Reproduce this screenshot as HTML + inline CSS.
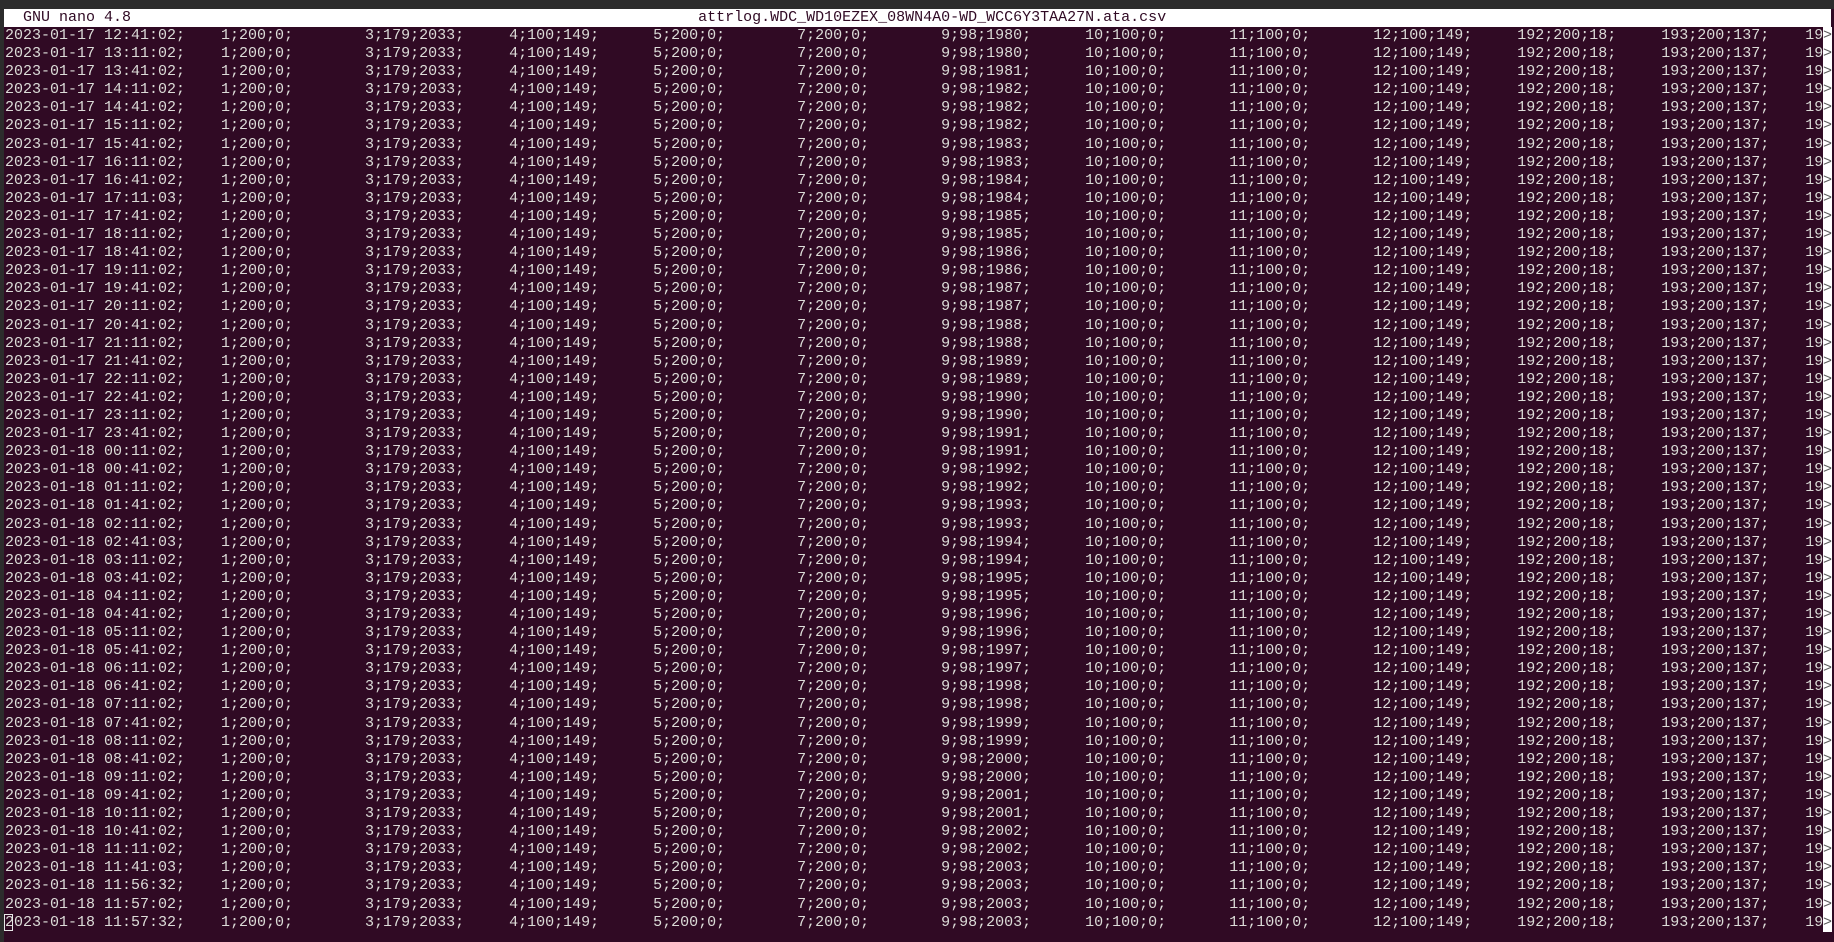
<!DOCTYPE html>
<html><head><meta charset="utf-8"><style>
html,body{margin:0;padding:0;width:1834px;height:942px;overflow:hidden;background:#2c2c2c;}
#term{position:absolute;left:4px;top:9px;width:1830px;height:933px;background:#300a24;}
#title{position:absolute;left:4px;top:9px;width:1827px;height:18px;background:#fff;}
pre{margin:0;font-family:"Liberation Mono",monospace;font-size:15px;line-height:18.1px;white-space:pre;}
#tt{position:absolute;left:5px;top:9px;color:#300a24;line-height:18px;}
#body{position:absolute;left:5px;top:27px;color:#dcdcd8;}
#strip{position:absolute;left:1823px;top:27px;width:9px;height:905px;background:#fff;}
#gt{position:absolute;left:1823px;top:27px;color:#5a5a5a;}
#cur{position:absolute;left:4px;top:914px;width:9px;height:17px;border:1px solid #e8e8e8;box-sizing:border-box;}
</style></head><body>
<div id="term"></div>
<div id="title"></div>
<pre id="tt">  GNU nano 4.8                                                               attrlog.WDC_WD10EZEX_08WN4A0-WD_WCC6Y3TAA27N.ata.csv</pre>
<pre id="body">2023-01-17 12:41:02;    1;200;0;        3;179;2033;     4;100;149;      5;200;0;        7;200;0;        9;98;1980;      10;100;0;       11;100;0;       12;100;149;     192;200;18;     193;200;137;    19
2023-01-17 13:11:02;    1;200;0;        3;179;2033;     4;100;149;      5;200;0;        7;200;0;        9;98;1980;      10;100;0;       11;100;0;       12;100;149;     192;200;18;     193;200;137;    19
2023-01-17 13:41:02;    1;200;0;        3;179;2033;     4;100;149;      5;200;0;        7;200;0;        9;98;1981;      10;100;0;       11;100;0;       12;100;149;     192;200;18;     193;200;137;    19
2023-01-17 14:11:02;    1;200;0;        3;179;2033;     4;100;149;      5;200;0;        7;200;0;        9;98;1982;      10;100;0;       11;100;0;       12;100;149;     192;200;18;     193;200;137;    19
2023-01-17 14:41:02;    1;200;0;        3;179;2033;     4;100;149;      5;200;0;        7;200;0;        9;98;1982;      10;100;0;       11;100;0;       12;100;149;     192;200;18;     193;200;137;    19
2023-01-17 15:11:02;    1;200;0;        3;179;2033;     4;100;149;      5;200;0;        7;200;0;        9;98;1982;      10;100;0;       11;100;0;       12;100;149;     192;200;18;     193;200;137;    19
2023-01-17 15:41:02;    1;200;0;        3;179;2033;     4;100;149;      5;200;0;        7;200;0;        9;98;1983;      10;100;0;       11;100;0;       12;100;149;     192;200;18;     193;200;137;    19
2023-01-17 16:11:02;    1;200;0;        3;179;2033;     4;100;149;      5;200;0;        7;200;0;        9;98;1983;      10;100;0;       11;100;0;       12;100;149;     192;200;18;     193;200;137;    19
2023-01-17 16:41:02;    1;200;0;        3;179;2033;     4;100;149;      5;200;0;        7;200;0;        9;98;1984;      10;100;0;       11;100;0;       12;100;149;     192;200;18;     193;200;137;    19
2023-01-17 17:11:03;    1;200;0;        3;179;2033;     4;100;149;      5;200;0;        7;200;0;        9;98;1984;      10;100;0;       11;100;0;       12;100;149;     192;200;18;     193;200;137;    19
2023-01-17 17:41:02;    1;200;0;        3;179;2033;     4;100;149;      5;200;0;        7;200;0;        9;98;1985;      10;100;0;       11;100;0;       12;100;149;     192;200;18;     193;200;137;    19
2023-01-17 18:11:02;    1;200;0;        3;179;2033;     4;100;149;      5;200;0;        7;200;0;        9;98;1985;      10;100;0;       11;100;0;       12;100;149;     192;200;18;     193;200;137;    19
2023-01-17 18:41:02;    1;200;0;        3;179;2033;     4;100;149;      5;200;0;        7;200;0;        9;98;1986;      10;100;0;       11;100;0;       12;100;149;     192;200;18;     193;200;137;    19
2023-01-17 19:11:02;    1;200;0;        3;179;2033;     4;100;149;      5;200;0;        7;200;0;        9;98;1986;      10;100;0;       11;100;0;       12;100;149;     192;200;18;     193;200;137;    19
2023-01-17 19:41:02;    1;200;0;        3;179;2033;     4;100;149;      5;200;0;        7;200;0;        9;98;1987;      10;100;0;       11;100;0;       12;100;149;     192;200;18;     193;200;137;    19
2023-01-17 20:11:02;    1;200;0;        3;179;2033;     4;100;149;      5;200;0;        7;200;0;        9;98;1987;      10;100;0;       11;100;0;       12;100;149;     192;200;18;     193;200;137;    19
2023-01-17 20:41:02;    1;200;0;        3;179;2033;     4;100;149;      5;200;0;        7;200;0;        9;98;1988;      10;100;0;       11;100;0;       12;100;149;     192;200;18;     193;200;137;    19
2023-01-17 21:11:02;    1;200;0;        3;179;2033;     4;100;149;      5;200;0;        7;200;0;        9;98;1988;      10;100;0;       11;100;0;       12;100;149;     192;200;18;     193;200;137;    19
2023-01-17 21:41:02;    1;200;0;        3;179;2033;     4;100;149;      5;200;0;        7;200;0;        9;98;1989;      10;100;0;       11;100;0;       12;100;149;     192;200;18;     193;200;137;    19
2023-01-17 22:11:02;    1;200;0;        3;179;2033;     4;100;149;      5;200;0;        7;200;0;        9;98;1989;      10;100;0;       11;100;0;       12;100;149;     192;200;18;     193;200;137;    19
2023-01-17 22:41:02;    1;200;0;        3;179;2033;     4;100;149;      5;200;0;        7;200;0;        9;98;1990;      10;100;0;       11;100;0;       12;100;149;     192;200;18;     193;200;137;    19
2023-01-17 23:11:02;    1;200;0;        3;179;2033;     4;100;149;      5;200;0;        7;200;0;        9;98;1990;      10;100;0;       11;100;0;       12;100;149;     192;200;18;     193;200;137;    19
2023-01-17 23:41:02;    1;200;0;        3;179;2033;     4;100;149;      5;200;0;        7;200;0;        9;98;1991;      10;100;0;       11;100;0;       12;100;149;     192;200;18;     193;200;137;    19
2023-01-18 00:11:02;    1;200;0;        3;179;2033;     4;100;149;      5;200;0;        7;200;0;        9;98;1991;      10;100;0;       11;100;0;       12;100;149;     192;200;18;     193;200;137;    19
2023-01-18 00:41:02;    1;200;0;        3;179;2033;     4;100;149;      5;200;0;        7;200;0;        9;98;1992;      10;100;0;       11;100;0;       12;100;149;     192;200;18;     193;200;137;    19
2023-01-18 01:11:02;    1;200;0;        3;179;2033;     4;100;149;      5;200;0;        7;200;0;        9;98;1992;      10;100;0;       11;100;0;       12;100;149;     192;200;18;     193;200;137;    19
2023-01-18 01:41:02;    1;200;0;        3;179;2033;     4;100;149;      5;200;0;        7;200;0;        9;98;1993;      10;100;0;       11;100;0;       12;100;149;     192;200;18;     193;200;137;    19
2023-01-18 02:11:02;    1;200;0;        3;179;2033;     4;100;149;      5;200;0;        7;200;0;        9;98;1993;      10;100;0;       11;100;0;       12;100;149;     192;200;18;     193;200;137;    19
2023-01-18 02:41:03;    1;200;0;        3;179;2033;     4;100;149;      5;200;0;        7;200;0;        9;98;1994;      10;100;0;       11;100;0;       12;100;149;     192;200;18;     193;200;137;    19
2023-01-18 03:11:02;    1;200;0;        3;179;2033;     4;100;149;      5;200;0;        7;200;0;        9;98;1994;      10;100;0;       11;100;0;       12;100;149;     192;200;18;     193;200;137;    19
2023-01-18 03:41:02;    1;200;0;        3;179;2033;     4;100;149;      5;200;0;        7;200;0;        9;98;1995;      10;100;0;       11;100;0;       12;100;149;     192;200;18;     193;200;137;    19
2023-01-18 04:11:02;    1;200;0;        3;179;2033;     4;100;149;      5;200;0;        7;200;0;        9;98;1995;      10;100;0;       11;100;0;       12;100;149;     192;200;18;     193;200;137;    19
2023-01-18 04:41:02;    1;200;0;        3;179;2033;     4;100;149;      5;200;0;        7;200;0;        9;98;1996;      10;100;0;       11;100;0;       12;100;149;     192;200;18;     193;200;137;    19
2023-01-18 05:11:02;    1;200;0;        3;179;2033;     4;100;149;      5;200;0;        7;200;0;        9;98;1996;      10;100;0;       11;100;0;       12;100;149;     192;200;18;     193;200;137;    19
2023-01-18 05:41:02;    1;200;0;        3;179;2033;     4;100;149;      5;200;0;        7;200;0;        9;98;1997;      10;100;0;       11;100;0;       12;100;149;     192;200;18;     193;200;137;    19
2023-01-18 06:11:02;    1;200;0;        3;179;2033;     4;100;149;      5;200;0;        7;200;0;        9;98;1997;      10;100;0;       11;100;0;       12;100;149;     192;200;18;     193;200;137;    19
2023-01-18 06:41:02;    1;200;0;        3;179;2033;     4;100;149;      5;200;0;        7;200;0;        9;98;1998;      10;100;0;       11;100;0;       12;100;149;     192;200;18;     193;200;137;    19
2023-01-18 07:11:02;    1;200;0;        3;179;2033;     4;100;149;      5;200;0;        7;200;0;        9;98;1998;      10;100;0;       11;100;0;       12;100;149;     192;200;18;     193;200;137;    19
2023-01-18 07:41:02;    1;200;0;        3;179;2033;     4;100;149;      5;200;0;        7;200;0;        9;98;1999;      10;100;0;       11;100;0;       12;100;149;     192;200;18;     193;200;137;    19
2023-01-18 08:11:02;    1;200;0;        3;179;2033;     4;100;149;      5;200;0;        7;200;0;        9;98;1999;      10;100;0;       11;100;0;       12;100;149;     192;200;18;     193;200;137;    19
2023-01-18 08:41:02;    1;200;0;        3;179;2033;     4;100;149;      5;200;0;        7;200;0;        9;98;2000;      10;100;0;       11;100;0;       12;100;149;     192;200;18;     193;200;137;    19
2023-01-18 09:11:02;    1;200;0;        3;179;2033;     4;100;149;      5;200;0;        7;200;0;        9;98;2000;      10;100;0;       11;100;0;       12;100;149;     192;200;18;     193;200;137;    19
2023-01-18 09:41:02;    1;200;0;        3;179;2033;     4;100;149;      5;200;0;        7;200;0;        9;98;2001;      10;100;0;       11;100;0;       12;100;149;     192;200;18;     193;200;137;    19
2023-01-18 10:11:02;    1;200;0;        3;179;2033;     4;100;149;      5;200;0;        7;200;0;        9;98;2001;      10;100;0;       11;100;0;       12;100;149;     192;200;18;     193;200;137;    19
2023-01-18 10:41:02;    1;200;0;        3;179;2033;     4;100;149;      5;200;0;        7;200;0;        9;98;2002;      10;100;0;       11;100;0;       12;100;149;     192;200;18;     193;200;137;    19
2023-01-18 11:11:02;    1;200;0;        3;179;2033;     4;100;149;      5;200;0;        7;200;0;        9;98;2002;      10;100;0;       11;100;0;       12;100;149;     192;200;18;     193;200;137;    19
2023-01-18 11:41:03;    1;200;0;        3;179;2033;     4;100;149;      5;200;0;        7;200;0;        9;98;2003;      10;100;0;       11;100;0;       12;100;149;     192;200;18;     193;200;137;    19
2023-01-18 11:56:32;    1;200;0;        3;179;2033;     4;100;149;      5;200;0;        7;200;0;        9;98;2003;      10;100;0;       11;100;0;       12;100;149;     192;200;18;     193;200;137;    19
2023-01-18 11:57:02;    1;200;0;        3;179;2033;     4;100;149;      5;200;0;        7;200;0;        9;98;2003;      10;100;0;       11;100;0;       12;100;149;     192;200;18;     193;200;137;    19
2023-01-18 11:57:32;    1;200;0;        3;179;2033;     4;100;149;      5;200;0;        7;200;0;        9;98;2003;      10;100;0;       11;100;0;       12;100;149;     192;200;18;     193;200;137;    19</pre>
<div id="strip"></div>
<pre id="gt">&gt;
&gt;
&gt;
&gt;
&gt;
&gt;
&gt;
&gt;
&gt;
&gt;
&gt;
&gt;
&gt;
&gt;
&gt;
&gt;
&gt;
&gt;
&gt;
&gt;
&gt;
&gt;
&gt;
&gt;
&gt;
&gt;
&gt;
&gt;
&gt;
&gt;
&gt;
&gt;
&gt;
&gt;
&gt;
&gt;
&gt;
&gt;
&gt;
&gt;
&gt;
&gt;
&gt;
&gt;
&gt;
&gt;
&gt;
&gt;
&gt;
&gt;</pre>
<div id="cur"></div>
</body></html>
